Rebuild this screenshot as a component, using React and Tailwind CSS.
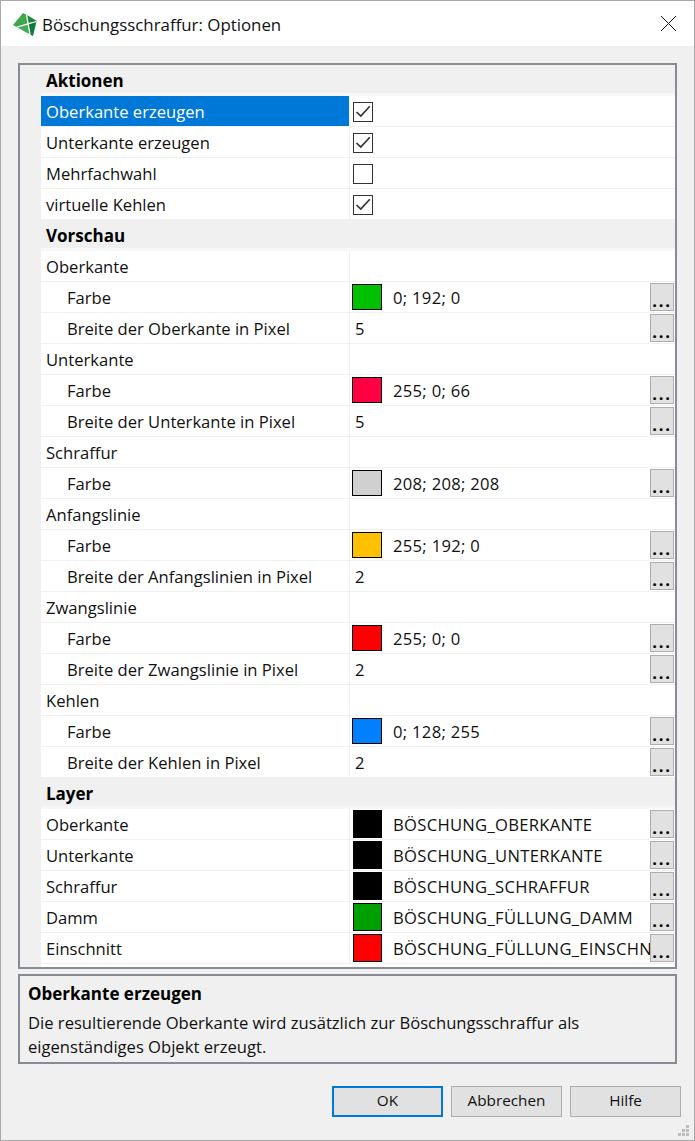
const rows = [
  { kind: 'head', label: 'Aktionen' },
  { label: 'Oberkante erzeugen', check: true, selected: true },
  { label: 'Unterkante erzeugen', check: true },
  { label: 'Mehrfachwahl', check: false },
  { label: 'virtuelle Kehlen', check: true },
  { kind: 'head', label: 'Vorschau' },
  { label: 'Oberkante' },
  { label: 'Farbe', sub: true, swatch: 'bg-[#00c000]', value: '0; 192; 0', more: true },
  { label: 'Breite der Oberkante in Pixel', sub: true, value: '5', more: true },
  { label: 'Unterkante' },
  { label: 'Farbe', sub: true, swatch: 'bg-[#ff0042]', value: '255; 0; 66', more: true },
  { label: 'Breite der Unterkante in Pixel', sub: true, value: '5', more: true },
  { label: 'Schraffur' },
  { label: 'Farbe', sub: true, swatch: 'bg-[#d0d0d0]', value: '208; 208; 208', more: true },
  { label: 'Anfangslinie' },
  { label: 'Farbe', sub: true, swatch: 'bg-[#ffc000]', value: '255; 192; 0', more: true },
  { label: 'Breite der Anfangslinien in Pixel', sub: true, value: '2', more: true },
  { label: 'Zwangslinie' },
  { label: 'Farbe', sub: true, swatch: 'bg-[#ff0000]', value: '255; 0; 0', more: true },
  { label: 'Breite der Zwangslinie in Pixel', sub: true, value: '2', more: true },
  { label: 'Kehlen' },
  { label: 'Farbe', sub: true, swatch: 'bg-[#0080ff]', value: '0; 128; 255', more: true },
  { label: 'Breite der Kehlen in Pixel', sub: true, value: '2', more: true },
  { kind: 'head', label: 'Layer' },
  { label: 'Oberkante', swatch: 'bg-black', layer: true, value: 'BÖSCHUNG_OBERKANTE', more: true },
  { label: 'Unterkante', swatch: 'bg-black', layer: true, value: 'BÖSCHUNG_UNTERKANTE', more: true },
  { label: 'Schraffur', swatch: 'bg-black', layer: true, value: 'BÖSCHUNG_SCHRAFFUR', more: true },
  { label: 'Damm', swatch: 'bg-[#00a000]', layer: true, value: 'BÖSCHUNG_FÜLLUNG_DAMM', more: true },
  { label: 'Einschnitt', swatch: 'bg-[#ff0000]', layer: true, value: 'BÖSCHUNG_FÜLLUNG_EINSCHNITT', more: true },
];

function Logo() {
  return (
    <svg width="24" height="24" viewBox="0 0 24 24" className="shrink-0">
      <polygon points="0,13 10,1 13.5,2.7 15,11 4,15.2" fill="#3fa64a" />
      <polygon points="13.5,2.7 24,9 23.5,9.5 15,11" fill="#15893d" />
      <polygon points="15,11 23.5,9.5 20,24 17,22.4" fill="#0f7d3a" />
      <polygon points="4,15.2 15,11 17,22.4" fill="#45a85a" />
      <path d="M13.5 2.7 L17 22.6 M4 15.2 L23.5 9.5" stroke="#fff" strokeWidth="1.3" fill="none" />
    </svg>
  );
}

function CheckBox({ checked }) {
  return (
    <div className="w-5 h-5 mt-[2px] border border-[#333] bg-white flex items-center justify-center">
      {checked && (
        <svg width="18" height="18" viewBox="0 0 18 18" fill="none">
          <path d="M2.5 9 L6.8 13 L15.8 3.2" stroke="#333" strokeWidth="1.7" />
        </svg>
      )}
    </div>
  );
}

function Row({ row }) {
  if (row.kind === 'head') {
    return (
      <div className="h-[31px] pl-[5px] pt-[3px] flex items-center bg-[#f0f0f0] border-b-[3px] border-b-[#f7f7f7] font-bold text-[17px] text-black">
        {row.label}
      </div>
    );
  }
  return (
    <div className="h-[31px] flex bg-white border-b border-[#f0f0f0]">
      <div
        className={`w-[308px] shrink-0 pt-[2px] flex items-center ${row.sub ? 'pl-[26px]' : 'pl-[5px]'} ${
          row.selected ? 'bg-[#0078d7] text-white' : ''
        }`}
      >
        {row.label}
      </div>
      <div className="flex-1 min-w-0 flex items-center border-l border-[#f0f0f0] pl-[3px]">
        {row.check !== undefined && <CheckBox checked={row.check} />}
        {row.swatch && (
          <div
            className={`shrink-0 border border-black ${row.swatch} ${
              row.layer ? 'w-[29px] h-[28px]' : 'w-[30px] h-[26px] -ml-px'
            }`}
          />
        )}
        {row.value && (
          <div
            className={`flex-1 min-w-0 pt-[2px] overflow-hidden whitespace-nowrap tracking-[0.3px] ${
              row.swatch ? 'pl-[11px]' : 'pl-[2px]'
            }`}
          >
            {row.value}
          </div>
        )}
        {row.more && (
          <div className="w-6 h-[28px] shrink-0 mr-[1px] bg-[#e1e1e1] border border-[#adadad] flex items-end justify-center leading-[19px] tracking-[1.8px] font-bold text-black">
            ...
          </div>
        )}
      </div>
    </div>
  );
}

function Button({ label, focused }) {
  return (
    <div
      className={`w-[111px] h-[31px] pb-[2px] flex items-center justify-center bg-[#e1e1e1] text-[15.3px] ${
        focused ? 'border-2 border-[#0078d7]' : 'border border-[#adadad]'
      }`}
    >
      {label}
    </div>
  );
}

export default function App() {
  return (
    <div className="relative w-[695px] h-[1141px] flex flex-col bg-[#f0f0f0] border border-[#a9a9a9] text-[#111] text-[16.6px] font-['Open_Sans',sans-serif] overflow-hidden">
      {/* Title bar */}
      <div className="h-[45px] shrink-0 bg-white flex items-center pl-[12px] pr-[17px] gap-[5px]">
        <Logo />
        <div className="flex-1 pt-[2px] text-[16.85px]">Böschungsschraffur: Optionen</div>
        <svg width="17" height="17" viewBox="0 0 17 17">
          <path d="M1 1 L16 16 M16 1 L1 16" stroke="#111" strokeWidth="1" />
        </svg>
      </div>

      <div className="flex-1 flex flex-col pt-[17px] pl-[17px] pr-[17px]">
        {/* Property grid */}
        <div className="h-[906px] border-2 border-[#878b94] bg-[#f0f0f0] pl-[21px] overflow-hidden">
          {rows.map((row, i) => (
            <Row key={i} row={row} />
          ))}
          <div className="h-[3px] bg-white" />
        </div>

        {/* Description */}
        <div className="h-[90px] mt-[5px] border-2 border-[#878b94] px-[8px] pt-[5px]">
          <div className="font-bold text-[17px] text-black leading-[25px]">Oberkante erzeugen</div>
          <div className="leading-[24px] mt-[5px]">
            Die resultierende Oberkante wird zusätzlich zur Böschungsschraffur als
            <br />
            eigenständiges Objekt erzeugt.
          </div>
        </div>

        <div className="mt-[22px] -mr-[4px] flex justify-end gap-2">
          <Button label="OK" focused />
          <Button label="Abbrechen" />
          <Button label="Hilfe" />
        </div>
      </div>

      {/* Resize grip */}
      <svg className="absolute right-[5px] bottom-[4px]" width="11" height="11" viewBox="0 0 11 11" fill="#bdbdbd">
        <rect x="8" y="0" width="3" height="3" />
        <rect x="4" y="4" width="3" height="3" />
        <rect x="8" y="4" width="3" height="3" />
        <rect x="0" y="8" width="3" height="3" />
        <rect x="4" y="8" width="3" height="3" />
        <rect x="8" y="8" width="3" height="3" />
      </svg>
    </div>
  );
}
